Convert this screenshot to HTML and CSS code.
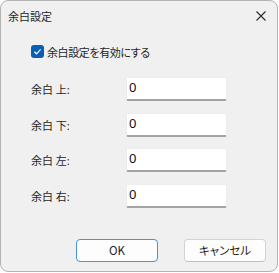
FILE: index.html
```html
<!DOCTYPE html>
<html>
    <head>
        <meta charset="utf-8">
        <link rel="stylesheet" href="styles.css">
    </head>
    <body>
        <div class="window">
            <div class="title-bar">
                <span class="title">余白設定</span>
                <svg class="close" width="10" height="10" viewBox="0 0 10 10">
                    <path d="M0.5 0.5 L9.5 9.5 M9.5 0.5 L0.5 9.5" stroke="#2b2b2b" stroke-width="1.1" fill="none"/>
                </svg>
            </div>

            <div class="content">
                <label class="check-row">
                    <svg class="checkbox" width="13" height="13" viewBox="0 0 13 13">
                        <rect x="0" y="0" width="13" height="13" rx="3" fill="#0a5fb4"/>
                        <path d="M3.4 6.8 L5.5 8.8 L9.6 4.4" stroke="#ffffff" stroke-width="1.2" fill="none"/>
                    </svg>
                    <span>余白設定を有効にする</span>
                </label>

                <div class="margin-grid">
                    <span class="field-label">余白 上:</span>
                    <div class="field">0</div>

                    <span class="field-label">余白 下:</span>
                    <div class="field">0</div>

                    <span class="field-label">余白 左:</span>
                    <div class="field">0</div>

                    <span class="field-label">余白 右:</span>
                    <div class="field">0</div>
                </div>

                <div class="button-group">
                    <button class="ok-btn">OK</button>
                    <button class="cancel-btn">キャンセル</button>
                </div>
            </div>
        </div>
    </body>
</html>
```

FILE: styles.css
```css
body {
    margin: 0;
    background-color: #ffffff;
    font-family: "Noto Sans CJK JP", "Noto Sans", sans-serif;
    font-feature-settings: "palt";
    color: #1f1f1f;
}

.window {
    width: 278px;
    height: 272px;
    box-sizing: border-box;
    border: 1px solid #b4b4b4;
    border-radius: 8px;
    background-color: #f0f0f0;
    display: flex;
    flex-direction: column;
}

.title-bar {
    height: 30px;
    display: flex;
    align-items: center;
    justify-content: space-between;
    padding: 0 11px 0 7px;
}

.title {
    font-size: 11px;
}

.close {
    margin-top: -1px;
}

.content {
    padding-left: 30px;
    display: flex;
    flex-direction: column;
}

.check-row {
    display: flex;
    align-items: center;
    gap: 3px;
    margin-top: 14px;
    height: 13px;
    font-size: 11px;
    letter-spacing: -0.4px;
}

.margin-grid {
    display: grid;
    grid-template-columns: 95px 101px;
    grid-auto-rows: 24px;
    row-gap: 11.5px;
    margin-top: 19px;
    align-items: center;
}

.field-label {
    font-family: "Noto Sans", "Noto Sans CJK JP", sans-serif;
    font-size: 11px;
    white-space: pre;
}

.field {
    height: 24px;
    box-sizing: border-box;
    background-color: #ffffff;
    border: 1px solid #ececec;
    border-bottom: 2px solid #a3a3a3;
    border-radius: 2px;
    padding: 2px 0 0 2px;
    font-family: "Noto Sans", sans-serif;
    font-size: 13px;
    line-height: 15px;
    color: #111;
}

.button-group {
    display: flex;
    gap: 26px;
    margin-top: 31px;
    padding-left: 45px;
}

button {
    width: 82px;
    height: 23px;
    box-sizing: border-box;
    background-color: #fdfdfd;
    border: 1px solid #d3d3d3;
    border-bottom-color: #c2c2c2;
    border-radius: 4px;
    font-family: "Noto Sans CJK JP", "Noto Sans", sans-serif;
    font-feature-settings: "palt";
    font-size: 11.5px;
    color: #1f1f1f;
    padding: 0;
}

.ok-btn {
    border: 1px solid #4b90d8;
}
```
